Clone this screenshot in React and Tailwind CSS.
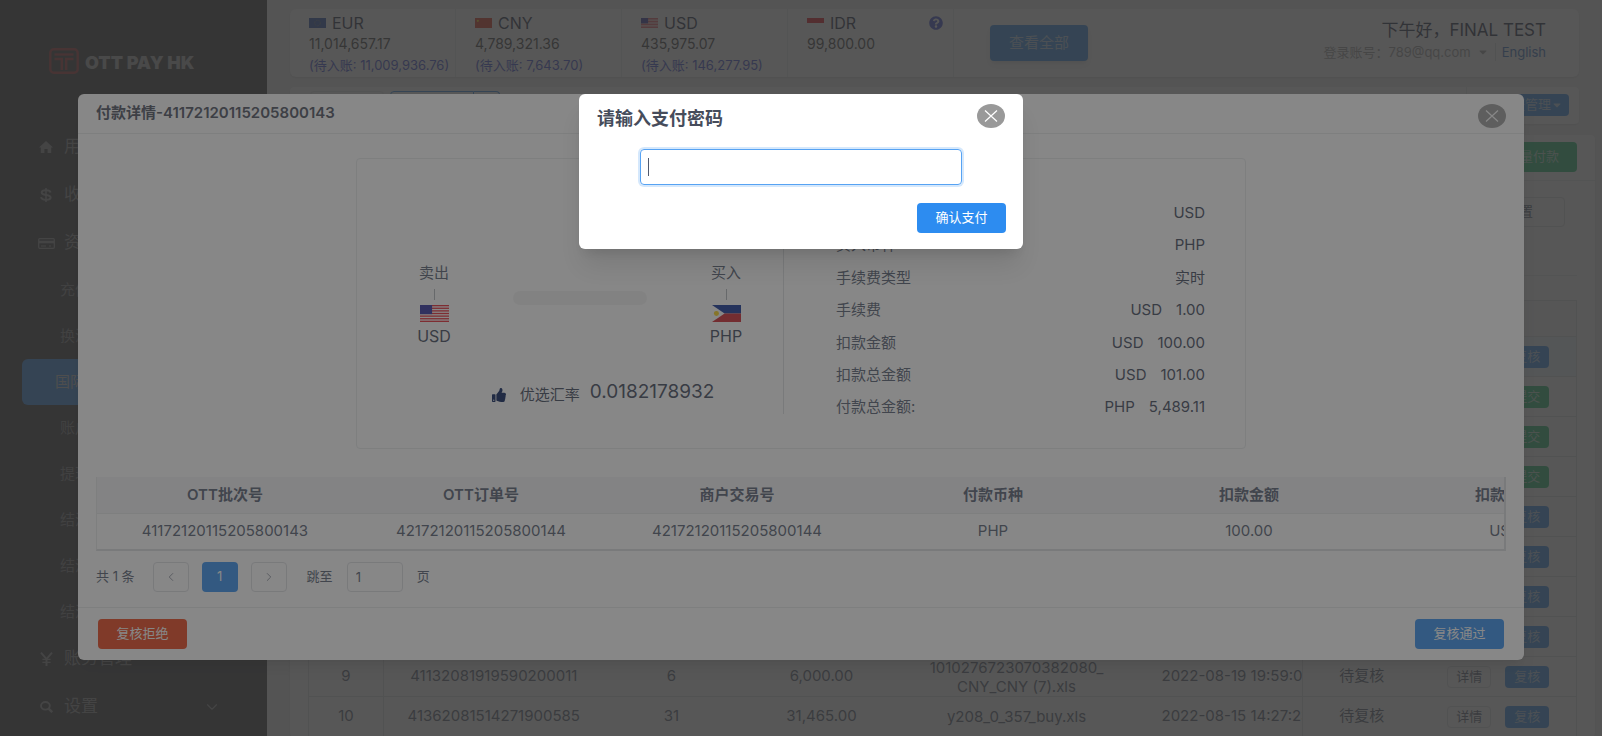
import React, { useState } from 'react'
import { FaThumbsUp, FaCaretDown, FaQuestionCircle } from 'react-icons/fa'
import { ChevronDown, ChevronLeft, ChevronRight } from 'lucide-react'

const FLAG_SIZES = {
  sm: 'h-[10px] w-[17px]',
  md: 'h-[17px] w-[29px]',
}

function Flag({ code, size = 'sm' }) {
  return (
    <svg viewBox="0 0 30 18" preserveAspectRatio="none" className={`${FLAG_SIZES[size]} shrink-0`} aria-hidden="true">
      {code === 'EUR' && (
        <>
          <rect width="30" height="18" fill="#1c47a8" />
          <circle cx="15" cy="9" r="5" fill="none" stroke="#c9b53a" strokeWidth="1" strokeDasharray="1 1.6" />
        </>
      )}
      {code === 'CNY' && (
        <>
          <rect width="30" height="18" fill="#de2910" />
          <circle cx="5" cy="5" r="2" fill="#ffde00" />
        </>
      )}
      {code === 'USD' && (
        <>
          <rect width="30" height="18" fill="#ffffff" />
          {[0, 2, 4, 6, 8, 10, 12].map((n) => (
            <rect key={n} y={n * 1.385} width="30" height="1.385" fill="#e8202c" />
          ))}
          <rect width="12.5" height="9.7" fill="#2a2a9c" />
        </>
      )}
      {code === 'IDR' && (
        <>
          <rect width="30" height="18" fill="#ffffff" />
          <rect width="30" height="9" fill="#e70011" />
        </>
      )}
      {code === 'PHP' && (
        <>
          <rect width="30" height="9" fill="#0c2f94" />
          <rect y="9" width="30" height="9" fill="#ce2028" />
          <path d="M0 0 L13 9 L0 18 Z" fill="#ffffff" />
          <circle cx="4.6" cy="9" r="2.6" fill="#fcd116" />
        </>
      )}
    </svg>
  )
}

function HomeIcon() {
  return (
    <svg viewBox="0 0 14 12" className="h-3 w-3.5" fill="currentColor" aria-hidden="true">
      <path d="M7 0 L14 6.4 H12.2 V12 H8.6 V8 H5.4 V12 H1.8 V6.4 H0 Z" />
    </svg>
  )
}

function DollarIcon() {
  return (
    <svg viewBox="0 0 12 14" className="h-3.5 w-3" fill="none" stroke="currentColor" strokeWidth="2" aria-hidden="true">
      <path d="M10.6 4.4 C10.2 2.8 8.4 2.2 6 2.2 C3.4 2.2 1.7 3 1.7 4.6 C1.7 6.2 3.4 6.6 6 7 C8.8 7.4 10.6 7.8 10.6 9.5 C10.6 11.1 8.8 11.8 6 11.8 C3.2 11.8 1.4 11 1.1 9.2" />
      <path d="M6 0 V14" strokeWidth="1.5" />
    </svg>
  )
}

function CardIcon() {
  return (
    <svg viewBox="0 0 17 11" className="h-[11px] w-[17px]" fill="none" stroke="currentColor" aria-hidden="true">
      <rect x="0.7" y="0.7" width="15.6" height="9.6" rx="1" strokeWidth="1.2" />
      <path d="M0.7 4 H16.3" strokeWidth="2.6" />
      <path d="M3 8 H8 M11 8 H13" />
    </svg>
  )
}

function YenIcon() {
  return (
    <svg viewBox="0 0 13 14" className="h-3.5 w-[13px]" fill="none" stroke="currentColor" strokeWidth="1.9" aria-hidden="true">
      <path d="M1 0.6 L6.5 7 L12 0.6 M6.5 7 V14" />
      <path d="M2.4 7.4 H10.6 M2.4 10.4 H10.6" strokeWidth="1.3" />
    </svg>
  )
}

function SearchIcon() {
  return (
    <svg viewBox="0 0 13 12" className="h-3 w-[13px]" fill="none" stroke="currentColor" strokeWidth="1.9" aria-hidden="true">
      <ellipse cx="5.4" cy="4.8" rx="4.4" ry="3.8" />
      <path d="M8.6 7.6 L12.2 11.2" strokeWidth="2.4" />
    </svg>
  )
}

const balances = [
  { code: 'EUR', amount: '11,014,657.17', pending: '11,009,936.76' },
  { code: 'CNY', amount: '4,789,321.36', pending: '7,643.70' },
  { code: 'USD', amount: '435,975.07', pending: '146,277.95' },
  { code: 'IDR', amount: '99,800.00', help: true },
]

const subMenu = ['充值管理', '换汇管理', '国际付款', '账户管理', '提现管理', '结汇申请', '结汇管理', '结汇查询']

const batches = [
  { id: 1, action: '复核', active: true },
  { id: 2, action: '提交' },
  { id: 3, action: '提交' },
  { id: 4, action: '提交' },
  { id: 5, action: '复核' },
  { id: 6, action: '复核' },
  { id: 7, action: '复核' },
  { id: 8, action: '复核' },
  {
    id: 9,
    action: '复核',
    batch: '41132081919590200011',
    count: '6',
    amount: '6,000.00',
    file: '1010276723070382080_ CNY_CNY (7).xls',
    date: '2022-08-19 19:59:02',
    status: '待复核',
  },
  {
    id: 10,
    action: '复核',
    batch: '41362081514271900585',
    count: '31',
    amount: '31,465.00',
    file: 'y208_0_357_buy.xls',
    date: '2022-08-15 14:27:23',
    status: '待复核',
  },
]

const details = [
  { label: '卖出币种', value: 'USD' },
  { label: '买入币种', value: 'PHP' },
  { label: '手续费类型', value: '实时' },
  { label: '手续费', unit: 'USD', value: '1.00' },
  { label: '扣款金额', unit: 'USD', value: '100.00' },
  { label: '扣款总金额', unit: 'USD', value: '101.00' },
  { label: '付款总金额:', unit: 'PHP', value: '5,489.11' },
]

const orderHeads = ['OTT批次号', 'OTT订单号', '商户交易号', '付款币种', '扣款金额', '扣款币种']
const orderRow = ['41172120115205800143', '42172120115205800144', '42172120115205800144', 'PHP', '100.00', 'USD']

function Logo() {
  return (
    <div className="flex items-center gap-1.5 pl-[49px]">
      <svg viewBox="0 0 30 26" className="h-[26px] w-[30px]" fill="none" stroke="#a02a2a" strokeWidth="2.4" aria-hidden="true">
        <rect x="1.3" y="1.3" width="27.4" height="23.4" rx="3.5" />
        <path d="M5.5 6.5 H24.5" />
        <path d="M5.5 11 H12.8 V22" />
        <path d="M24.5 11 H17.2 V22" />
      </svg>
      <span className="pt-1 text-lg leading-5 font-black whitespace-nowrap text-[#a8a8a8]">OTT PAY HK</span>
    </div>
  )
}

function MenuItem({ icon, children, arrow }) {
  return (
    <a href="#" className="flex h-12 items-center pr-[46px] pl-[36px] text-[17px] text-[#8c8c8c]">
      <span className="mr-2 flex w-5 justify-center">{icon}</span>
      {children}
      {arrow && <ChevronDown size={18} strokeWidth={1.5} className="ml-auto" />}
    </a>
  )
}

function Sidebar() {
  return (
    <aside className="w-[267px] shrink-0 bg-[#2d2d30] pt-12">
      <Logo />
      <nav className="mt-[49px]">
        <MenuItem icon={<HomeIcon />}>用户中心</MenuItem>
        <MenuItem icon={<DollarIcon />}>收款管理</MenuItem>
        <MenuItem icon={<CardIcon />}>资金管理</MenuItem>
        {subMenu.map((name) =>
          name === '国际付款' ? (
            <a key={name} href="#" className="mx-[22px] flex h-[46px] items-center rounded-md bg-[#2d8cf0] pl-[33px] text-[15px] text-[#c8c8c8]">
              {name}
            </a>
          ) : (
            <a key={name} href="#" className="flex h-[46px] items-center pl-[60px] text-[15px] text-[#7c7c7c]">
              {name}
            </a>
          )
        )}
        <MenuItem icon={<YenIcon />}>账务管理</MenuItem>
        <MenuItem icon={<SearchIcon />} arrow>
          设置
        </MenuItem>
      </nav>
    </aside>
  )
}

function BalanceCell({ item }) {
  return (
    <div className="w-[166px] shrink-0 border-r border-[#e8eaec] pt-1 pl-[19px] whitespace-nowrap">
      <div className="flex h-5 items-center gap-1.5 text-base text-[#17233d]">
        <Flag code={item.code} />
        {item.code}
        {item.help && <FaQuestionCircle size={14} className="mr-2.5 ml-auto text-[#3346d3]" />}
      </div>
      <div className="h-[22px] text-sm leading-[22px] text-[#333333]">{item.amount}</div>
      {item.pending && <div className="h-5 text-[13px] leading-5 text-[#3346d3]">(待入账: {item.pending})</div>}
    </div>
  )
}

function Header() {
  return (
    <header className="mr-4 flex h-[68px] rounded-md bg-white shadow">
      {balances.map((item) => (
        <BalanceCell key={item.code} item={item} />
      ))}
      <button className="mt-4 ml-9 h-9 w-[98px] shrink-0 rounded bg-[#2d8cf0] text-[15px] text-[#b8d2ee] shadow-md">查看全部</button>
      <div className="ml-auto pt-2.5 pr-[33px] text-right whitespace-nowrap">
        <div className="text-[17px] leading-[22px] text-[#17233d]">下午好，FINAL TEST</div>
        <div className="mt-0.5 flex items-center justify-end text-[13px] leading-[18px] text-[#999999]">
          登录账号：789@qq.com
          <FaCaretDown size={12} className="mx-1.5" />
          <a href="#" className="border-l border-[#dcdee2] pl-1.5 text-[#2d6cc0]">
            English
          </a>
        </div>
      </div>
    </header>
  )
}

function BatchTable() {
  return (
    <table className="w-full table-fixed border border-[#dcdee2] text-center text-[15px] text-[#515a6e]">
      <colgroup>
        <col className="w-[75px]" />
        <col className="w-[220px]" />
        <col className="w-[136px]" />
        <col className="w-[164px]" />
        <col className="w-[226px]" />
        <col className="w-[173px]" />
        <col className="w-[118px]" />
        <col />
      </colgroup>
      <thead>
        <tr className="h-9 bg-[#f8f8f9]">
          <th colSpan={8}></th>
        </tr>
      </thead>
      <tbody>
        {batches.map((row) => (
          <tr key={row.id} className={`h-10 border-t border-[#dcdee2] ${row.active ? 'bg-[#ebf7ff]' : ''}`}>
            <td className="border-r border-[#dcdee2]">{row.id}</td>
            <td>{row.batch}</td>
            <td>{row.count}</td>
            <td>{row.amount}</td>
            <td className="px-6 leading-[19px]">{row.file}</td>
            <td className="overflow-hidden border-r border-[#dcdee2] pl-8 text-left whitespace-nowrap">{row.date}</td>
            <td>{row.status}</td>
            <td>
              <div className="flex justify-center gap-3.5">
                <button className="h-[22px] w-11 rounded-sm border border-[#dcdee2] text-[13px]">详情</button>
                {row.action === '提交' ? (
                  <button className="h-[22px] w-11 rounded-sm bg-[#19be6b] text-[13px] text-[#b8e0cc]">提交</button>
                ) : (
                  <button className="h-[22px] w-11 rounded-sm bg-[#2d8cf0] text-[13px] text-[#b8d2ee]">复核</button>
                )}
              </div>
            </td>
          </tr>
        ))}
      </tbody>
    </table>
  )
}

function Dashboard() {
  return (
    <div className="flex h-full">
      <Sidebar />
      <main className="min-w-0 flex-1 bg-[#f0f0f0] pt-[9px] pr-[7px] pl-[23px]">
        <Header />
        <div className="mt-2.5 mr-4 flex h-[37px] justify-between rounded bg-white shadow">
          <div className="flex pt-1 pl-5">
            <button className="mr-1.5 h-6 w-[74px] rounded-sm border border-[#e8eaec] text-[13px]">首页</button>
            <button className="h-6 w-[84px] rounded-l-sm border border-[#2d8cf0] text-[13px] text-[#2d8cf0]">国际付款</button>
            <button aria-label="关闭标签" className="h-6 w-[26px] rounded-r-sm border border-l-0 border-[#2d8cf0] text-[13px] text-[#2d8cf0]">
              ×
            </button>
          </div>
          <div className="flex items-start border-l border-[#e8eaec] px-2.5 pt-[7px]">
            <button className="flex h-[22px] w-[92px] items-center justify-end rounded-sm bg-[#2d8cf0] pr-1.5 text-[13px] text-[#b8d2ee]">
              标签管理
              <FaCaretDown size={12} />
            </button>
          </div>
        </div>
        <section className="mt-[11px] rounded bg-white px-[18px] shadow">
          <div className="-mx-[18px] flex h-[46px] items-start justify-end border-b border-[#e8eaec] px-[18px] pt-[7px]">
            <button className="h-[30px] w-[106px] rounded bg-[#19be6b] pr-[18px] text-right text-[13px] text-[#b8e0cc]">批量付款</button>
          </div>
          <div className="mb-6 flex h-[95px] items-start justify-end border-b border-[#e8eaec] pt-4 pr-3">
            <button className="h-[30px] w-[90px] rounded border border-[#dcdee2] text-[13px] text-[#515a6e]">重置</button>
          </div>
          <BatchTable />
        </section>
      </main>
    </div>
  )
}

function CloseButton({ onClick }) {
  return (
    <button type="button" aria-label="关闭" onClick={onClick} className="flex h-6 w-7 items-center justify-center rounded-[50%] bg-[#999999]">
      <svg viewBox="0 0 14 12" className="h-3 w-3.5" stroke="#ffffff" strokeWidth="1.2" aria-hidden="true">
        <path d="M1 0.5 L13 11.5 M13 0.5 L1 11.5" />
      </svg>
    </button>
  )
}

function Currency({ label, code }) {
  return (
    <div className="flex w-16 flex-col items-center text-[15px] text-[#515a6e]">
      <span className="leading-5">{label}</span>
      <span className="mt-1.5 h-[11px] w-px bg-[#b0b3ba]" />
      <span className="mt-[5px]">
        <Flag code={code} size="md" />
      </span>
      <span className="mt-1 text-base leading-5 text-[#3b4458]">{code}</span>
    </div>
  )
}

function ExchangeBox() {
  return (
    <div className="mx-auto flex w-full max-w-[890px] rounded border border-[#e8eaec] pt-[38px] pb-6">
      <div className="mb-2.5 flex-1 border-r border-[#dcdee2] pt-[66px]">
        <div className="flex items-start justify-between pr-[25px] pl-[45px]">
          <Currency label="卖出" code="USD" />
          <div className="mt-7 h-3.5 w-[134px] rounded-full bg-[#f3f3f3]" />
          <Currency label="买入" code="PHP" />
        </div>
        <div className="mt-[34px] flex items-end justify-center pl-[66px] text-[#3b4458]">
          <FaThumbsUp size={14} className="mr-3.5 mb-0.5 text-[#001a57]" />
          <span className="mr-2.5 text-[15px] leading-[18px]">优选汇率</span>
          <span className="text-[19px] leading-6">0.0182178932</span>
        </div>
      </div>
      <dl className="flex h-[227px] w-[461px] flex-col pr-10 pl-[52px] text-[15px]">
        {details.map((item) => (
          <div key={item.label} className="flex flex-1 items-center justify-between text-[#515a6e]">
            <dt>{item.label}</dt>
            <dd className="flex gap-3.5 text-[#3b4458]">
              {item.unit && <span>{item.unit}</span>}
              <span>{item.value}</span>
            </dd>
          </div>
        ))}
      </dl>
    </div>
  )
}

function OrderTable() {
  return (
    <div className="overflow-hidden border-r-2 border-b-2 border-l border-[#dcdee2] border-l-[#e8eaec]">
      <table className="w-[1536px] table-fixed text-center text-[15px] text-[#515a6e]">
        <thead>
          <tr className="h-9 bg-[#f5f5f7]">
            {orderHeads.map((head) => (
              <th key={head} className="border-b border-[#e8eaec] font-semibold">
                {head}
              </th>
            ))}
          </tr>
        </thead>
        <tbody>
          <tr className="h-9">
            {orderRow.map((cell, i) => (
              <td key={i}>{cell}</td>
            ))}
          </tr>
        </tbody>
      </table>
    </div>
  )
}

function Pager() {
  return (
    <div className="flex items-center pt-[11px] pb-[15px] text-[13px] text-[#515a6e]">
      <span className="mr-[18px] whitespace-nowrap">共 1 条</span>
      <button aria-label="上一页" className="flex h-[30px] w-9 items-center justify-center rounded border border-[#dcdee2] text-[#808695]">
        <ChevronLeft size={14} strokeWidth={1.5} />
      </button>
      <button className="mx-[13px] h-[30px] w-9 rounded bg-[#2d8cf0] text-white">1</button>
      <button aria-label="下一页" className="flex h-[30px] w-9 items-center justify-center rounded border border-[#dcdee2] text-[#808695]">
        <ChevronRight size={14} strokeWidth={1.5} />
      </button>
      <label className="ml-5 flex items-center">
        跳至
        <input type="text" defaultValue="1" className="mx-3.5 h-[30px] w-14 rounded border border-[#dcdee2] px-2" />
        页
      </label>
    </div>
  )
}

function DetailModal() {
  return (
    <div className="mx-[78px] mt-[94px] rounded-md bg-white shadow-lg">
      <div className="flex h-10 justify-between border-b border-[#e8eaec] pr-[18px] pl-[18px]">
        <h2 className="text-[15px] leading-[38px] font-semibold text-[#464c5b]">付款详情-41172120115205800143</h2>
        <div className="pt-2.5">
          <CloseButton />
        </div>
      </div>
      <div className="px-[18px] pt-6">
        <ExchangeBox />
        <div className="mt-7">
          <OrderTable />
        </div>
        <Pager />
      </div>
      <div className="flex justify-between border-t border-[#e8eaec] px-5 pt-[11px] pb-[11px] text-[13px] text-white">
        <button className="h-[30px] w-[89px] rounded bg-[#ed4014]">复核拒绝</button>
        <button className="h-[30px] w-[89px] rounded bg-[#2d8cf0]">复核通过</button>
      </div>
    </div>
  )
}

function PasswordModal({ value, onChange }) {
  return (
    <div className="mx-auto mt-[94px] w-[444px] rounded-md bg-white pb-4 shadow-xl">
      <div className="flex justify-between px-[18px] pt-2.5">
        <label htmlFor="pay-password" className="pt-0.5 text-lg leading-[26px] font-semibold text-[#464c5b]">
          请输入支付密码
        </label>
        <CloseButton />
      </div>
      <div className="relative mx-[61px] mt-[17px]">
        <input
          id="pay-password"
          type="password"
          value={value}
          onChange={(e) => onChange(e.target.value)}
          className="block h-9 w-full rounded border border-[#57a3f3] px-2 text-base shadow-[0_0_0_2px_rgba(45,140,240,0.2)] outline-none"
        />
        {!value && <span className="absolute top-[9px] left-2 h-[18px] w-px bg-[#515a6e]" />}
      </div>
      <div className="mt-[18px] flex justify-end px-[17px]">
        <button className="h-[30px] w-[89px] rounded bg-[#2d8cf0] text-[13px] text-white">确认支付</button>
      </div>
    </div>
  )
}

function App() {
  const [password, setPassword] = useState('')

  return (
    <div className="relative h-screen overflow-hidden [font-family:Inter,'Noto_Sans_CJK_SC',sans-serif]">
      <Dashboard />
      {/* each dialog brings its own mask */}
      <div className="absolute inset-0 bg-[rgba(55,55,55,0.6)]">
        <DetailModal />
      </div>
      <div className="absolute inset-0 bg-[rgba(55,55,55,0.6)]">
        <PasswordModal value={password} onChange={setPassword} />
      </div>
    </div>
  )
}

export default App
